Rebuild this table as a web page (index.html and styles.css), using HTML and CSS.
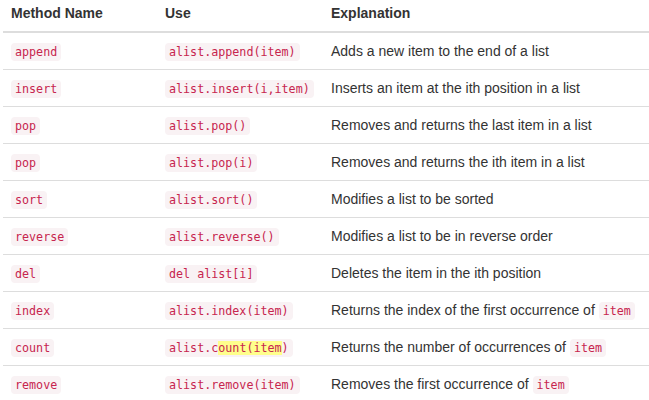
FILE: index.html
```html
<!DOCTYPE html>
<html>
<head>
<meta charset="utf-8">
<link rel="stylesheet" href="styles.css">
</head>
<body>
<div class="wrap">
<table class="methods">
  <thead>
    <tr><th class="c1">Method Name</th><th class="c2">Use</th><th>Explanation</th></tr>
  </thead>
  <tbody>
    <tr><td><code>append</code></td><td><code>alist.append(item)</code></td><td>Adds a new item to the end of a list</td></tr>
    <tr><td><code>insert</code></td><td><code>alist.insert(i,item)</code></td><td>Inserts an item at the ith position in a list</td></tr>
    <tr><td><code>pop</code></td><td><code>alist.pop()</code></td><td>Removes and returns the last item in a list</td></tr>
    <tr><td><code>pop</code></td><td><code>alist.pop(i)</code></td><td>Removes and returns the ith item in a list</td></tr>
    <tr><td><code>sort</code></td><td><code>alist.sort()</code></td><td>Modifies a list to be sorted</td></tr>
    <tr><td><code>reverse</code></td><td><code>alist.reverse()</code></td><td>Modifies a list to be in reverse order</td></tr>
    <tr><td><code>del</code></td><td><code>del alist[i]</code></td><td>Deletes the item in the ith position</td></tr>
    <tr><td><code>index</code></td><td><code>alist.index(item)</code></td><td>Returns the index of the first occurrence of <code>item</code></td></tr>
    <tr><td><code>count</code></td><td><code>alist.c<mark>ount(item</mark>)</code></td><td>Returns the number of occurrences of <code>item</code></td></tr>
    <tr><td><code>remove</code></td><td><code>alist.remove(item)</code></td><td>Removes the first occurrence of <code>item</code></td></tr>
  </tbody>
</table>
</div>
</body>
</html>
```

FILE: styles.css
```css
html, body {
  margin: 0;
  padding: 0;
  background: #fff;
}
body {
  font-family: "Liberation Sans", Arial, sans-serif;
  font-size: 14px;
  line-height: 20px;
  color: #333;
}
.wrap {
  padding-left: 3px;
  margin-top: -5px;
}
.methods {
  width: 100%;
  border-collapse: collapse;
  border-spacing: 0;
}
.methods th,
.methods td {
  padding: 8px;
  text-align: left;
  vertical-align: top;
  line-height: 20px;
}
.methods th {
  font-weight: bold;
  border-bottom: 2px solid #ddd;
}
.methods td {
  border-top: 1px solid #ddd;
}
.methods tbody tr:first-child td {
  border-top: 0;
}
.c1 { width: 138px; }
.c2 { width: 150px; }
code {
  font-family: "DejaVu Sans Mono", "Liberation Mono", monospace;
  font-size: 11.7px;
  line-height: 0;
  padding: 2px 4px;
  color: #c7254e;
  background: #f9f2f4;
  border-radius: 4px;
}
mark {
  background: #ffff8c;
  color: inherit;
  padding: 0;
}
```
